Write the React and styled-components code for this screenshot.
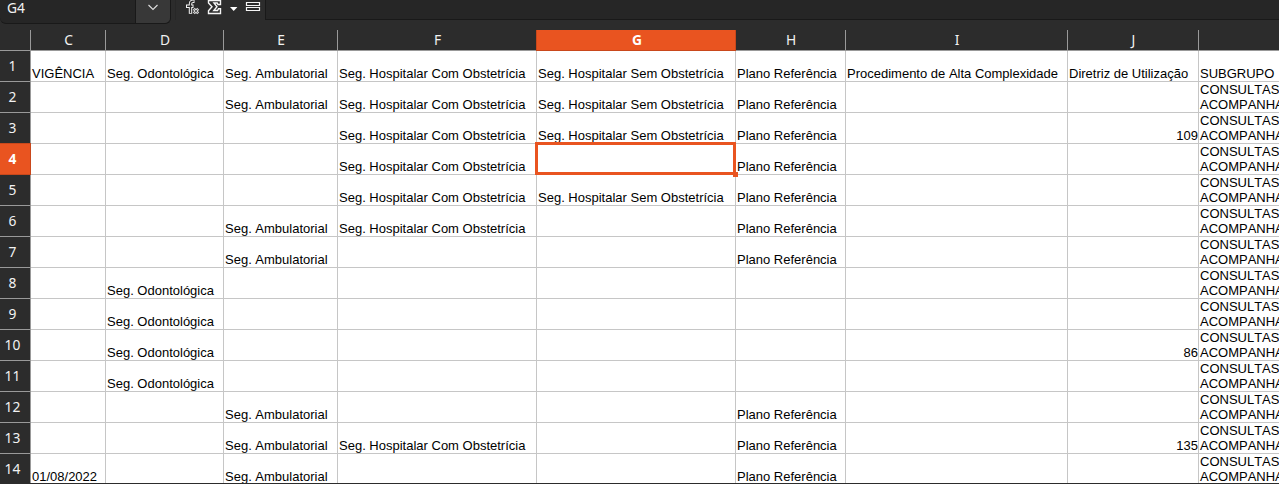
import React from "react";
import styled, { createGlobalStyle, css } from "styled-components";

const GlobalStyle = createGlobalStyle`
  body { margin: 0; background: #2c2c2c; overflow: hidden; }
  * { box-sizing: border-box; }
`;

const ACCENT = "#e95420";
const COLUMNS = "31px 75px 118px 114px 199px 199px 110px 222px 131px 163px";

const Window = styled.div`
  width: 1279px;
  height: 484px;
  overflow: hidden;
  background: #2c2c2c;
  display: flex;
  flex-direction: column;
`;

const FormulaBar = styled.div`
  height: 30px;
  flex: none;
  display: flex;
  align-items: flex-start;
`;

const NameBox = styled.div`
  width: 171px;
  height: 24px;
  display: flex;
  background: #262626;
  border: 1px solid #191919;
  border-width: 0 1px 1px 0;
  border-radius: 0 0 6px 6px;
  overflow: hidden;
`;

const CellName = styled.div`
  flex: 1;
  padding-left: 7px;
  font: 13.8px/15px "Noto Sans", sans-serif;
  color: #f2f2f2;
`;

const DropButton = styled.div`
  width: 35px;
  border-left: 1px solid #191919;
  background: #383838;
  display: flex;
  justify-content: center;
`;

const Tools = styled.div`
  width: 90px;
  height: 20px;
  margin-left: 4px;
  border-left: 1px solid #272727;
`;

const FormulaInput = styled.div`
  flex: 1;
  height: 20px;
  background: #262626;
  border-left: 1px solid #191919;
  border-bottom: 1px solid #191919;
`;

const Sheet = styled.div`
  height: 453px;
  overflow: hidden;
  display: flex;
  flex-direction: column;
`;

const Row = styled.div`
  display: grid;
  grid-template-columns: ${COLUMNS};
  height: ${(p) => (p.$header ? 21 : 31)}px;
  flex: none;
`;

const Heading = styled.div`
  background: #2c2c2c;
  color: #f2f2f2;
  border-right: 1px solid #999;
  border-bottom: 1px solid #999;
  font: 13.8px/20px "Noto Sans", sans-serif;
  text-align: center;
  padding-left: 1px;
  ${(p) => p.$row && css`
    line-height: 30px;
    padding: 0 5px 0 0;
  `}
  ${(p) => p.$active && css`
    background: ${ACCENT};
    color: #fff;
    font-weight: 700;
    border-color: #c9481b;
    margin-left: ${p.$row ? 0 : -1}px;
    margin-top: ${p.$row ? -1 : 0}px;
    padding-left: ${p.$row ? 0 : 2}px;
    border-left: ${p.$row ? 0 : 1}px solid #c9481b;
    border-top: ${p.$row ? 1 : 0}px solid #c9481b;
  `}
`;

const Cell = styled.div`
  position: relative;
  background: #fff;
  color: #000;
  border-right: 1px solid #c6c6c6;
  border-bottom: 1px solid #c6c6c6;
  display: flex;
  align-items: flex-end;
  justify-content: ${(p) => (p.$number ? "flex-end" : "flex-start")};
  padding: 0 ${(p) => (p.$number ? 0 : 1)}px 0 1px;
  font: 13px/15px "Liberation Sans", Arial, sans-serif;
  font-kerning: none;
  white-space: pre;
`;

const Cursor = styled.div`
  position: absolute;
  z-index: 2;
  left: -2px;
  top: -2px;
  width: 201px;
  height: 33px;
  border: 3px solid ${ACCENT};

  &::after {
    content: "";
    position: absolute;
    right: -5px;
    bottom: -5px;
    width: 5px;
    height: 5px;
    background: ${ACCENT};
  }
`;

const BottomEdge = styled.div`
  height: 1px;
  flex: none;
  background: #2c2c2c;
`;

const A = "Seg. Ambulatorial";
const O = "Seg. Odontológica";
const HC = "Seg. Hospitalar Com Obstetrícia";
const HS = "Seg. Hospitalar Sem Obstetrícia";
const P = "Plano Referência";
const SUB = "CONSULTAS\nACOMPANHA";

const letters = ["C", "D", "E", "F", "G", "H", "I", "J", ""];
const rows = [
  ["VIGÊNCIA", O, A, HC, HS, P, "Procedimento de Alta Complexidade", "Diretriz de Utilização", "SUBGRUPO"],
  ["", "", A, HC, HS, P, "", "", SUB],
  ["", "", "", HC, HS, P, "", 109, SUB],
  ["", "", "", HC, "", P, "", "", SUB],
  ["", "", "", HC, HS, P, "", "", SUB],
  ["", "", A, HC, "", P, "", "", SUB],
  ["", "", A, "", "", P, "", "", SUB],
  ["", O, "", "", "", "", "", "", SUB],
  ["", O, "", "", "", "", "", "", SUB],
  ["", O, "", "", "", "", "", 86, SUB],
  ["", O, "", "", "", "", "", "", SUB],
  ["", "", A, "", "", P, "", "", SUB],
  ["", "", A, HC, "", P, "", 135, SUB],
  ["01/08/2022", "", A, "", "", P, "", "", SUB],
];

function ToolIcons() {
  return (
    <svg width="89" height="20" viewBox="176 0 89 20" fill="none">
      {/* function wizard */}
      <path d="M194.5 1.3h-1.4q-2.6 0-2.6 2.6v9.8M186 6.2h7.5" stroke="#f5f5f5" strokeWidth="3.4" />
      <path d="M193.7 1.3h-.6q-2.6 0-2.6 2.6v9M187 6.2h5.6" stroke="#2c2c2c" strokeWidth="1.4" />
      <path d="M193.8 8.8l4.4 4.6M198.2 8.8l-4.4 4.6" stroke="#d8d8d8" strokeWidth="2.8" />
      <path d="M194.4 9.4l3.2 3.4M197.6 9.4l-3.2 3.4" stroke="#555" strokeWidth="1" />
      {/* sum */}
      <path d="M208.5.5h12v4h-2.5l-.8-1.5h-3.2l3 3.7-3.2 3.8h3.8l.9-1.8h2v4.8h-12v-2.7l3.5-4.1-3.5-3.7z" stroke="#f5f5f5" strokeWidth="1.4" />
      <path d="M230 7h7.4l-3.7 4z" fill="#fff" />
      {/* equals */}
      <path d="M246.5 2.5h13v3h-13zM246.5 7.5h13v3h-13z" stroke="#f5f5f5" strokeWidth="1.2" />
    </svg>
  );
}

export default function App() {
  return (
    <Window>
      <GlobalStyle />
      <FormulaBar>
        <NameBox>
          <CellName>G4</CellName>
          <DropButton>
            <svg width="12" height="14" viewBox="0 0 12 14" fill="none">
              <path d="M1.5 5l4.5 4.5L10.5 5" stroke="#e0e0e0" strokeWidth="1.1" />
            </svg>
          </DropButton>
        </NameBox>
        <Tools>
          <ToolIcons />
        </Tools>
        <FormulaInput />
      </FormulaBar>
      <Sheet>
        <Row $header>
          <Heading />
          {letters.map((l, i) => (
            <Heading key={i} $active={l === "G"}>{l}</Heading>
          ))}
        </Row>
        {rows.map((row, r) => (
          <Row key={r}>
            <Heading $row $active={r === 3}>{r + 1}</Heading>
            {row.map((value, c) => (
              <Cell key={c} $number={typeof value === "number"}>
                {value}
                {r === 3 && c === 4 && <Cursor />}
              </Cell>
            ))}
          </Row>
        ))}
      </Sheet>
      <BottomEdge />
    </Window>
  );
}
